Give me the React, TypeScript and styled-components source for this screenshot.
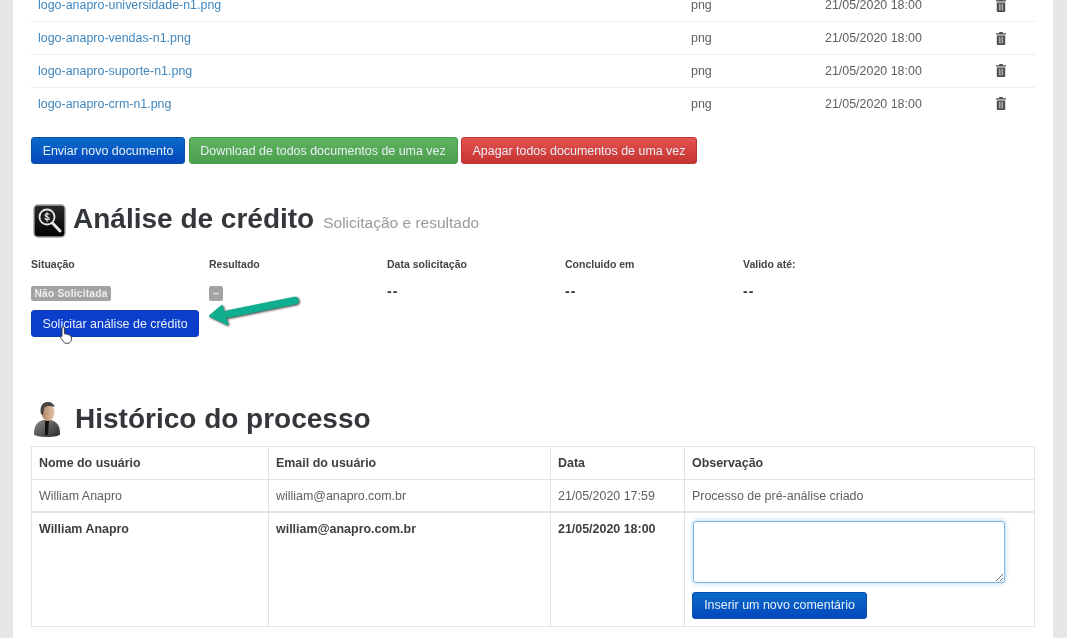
import React from "react";
import styled, { createGlobalStyle } from "styled-components";

const Global = createGlobalStyle`
  html, body { margin: 0; padding: 0; height: 100%; background: #e8e7e8; overflow: hidden; }
  body { font-family: "Liberation Sans", Arial, sans-serif; color: #555; }
`;

const Viewport = styled.div`
  width: 1067px;
  height: 638px;
  overflow: hidden;
  padding: 0 14px 0 13px;
  box-sizing: border-box;
  filter: blur(0.4px);
`;
const Panel = styled.main`
  display: flow-root;
  background: #fff;
  height: 100%;
  padding: 0 18px;
  box-sizing: border-box;
`;
const DocTable = styled.table`
  width: 1004px;
  margin-top: -11px;
  border-collapse: collapse;
  table-layout: fixed;
  font-size: 12.45px;
  td { height: 32.7px; padding: 0 7px; border-bottom: 1.5px solid #eeeeee; box-sizing: border-box; color: #5c6166; }
  tr:last-child td { border-bottom: none; }
`;
const FileLink = styled.a`
  color: #3f86bd;
  text-decoration: none;
`;
const Actions = styled.div`
  display: flex;
  gap: 3.5px;
  margin-top: 17.5px;
`;
const tones: Record<string, [string, string, string]> = {
  blue: ["#0a6cc9", "#0347bd", "#0a4fb0"],
  green: ["#60b460", "#4c9f4c", "#4a9a4a"],
  red: ["#e45350", "#c63432", "#bd3432"],
  solid: ["#0a3ecb", "#0a3ecb", "#0a3bb8"],
};
const Btn = styled.button<{ $tone: string; $w: number }>`
  width: ${(p) => p.$w}px;
  height: 27px;
  border-radius: 3px;
  border: 1px solid ${(p) => tones[p.$tone][2]};
  background: linear-gradient(${(p) => tones[p.$tone][0]}, ${(p) => tones[p.$tone][1]});
  color: #e8eef6;
  font: 12.45px "Liberation Sans", Arial, sans-serif;
  padding: 0;
  text-align: center;
  box-sizing: border-box;
  flex: none;
  display: block;
`;
const Heading = styled.div<{ $mt: number; $gap: number }>`
  display: flex;
  align-items: center;
  gap: ${(p) => p.$gap}px;
  margin-top: ${(p) => p.$mt}px;
  padding-left: 2px;
  height: 34px;
`;
const Title = styled.h2`
  margin: 0;
  font-size: 28px;
  font-weight: 700;
  color: #33363b;
  line-height: 34px;
  white-space: nowrap;
`;
const Sub = styled.small`
  font-size: 15.5px;
  font-weight: 400;
  color: #9a9a9a;
  margin-left: 9px;
`;
const InfoGrid = styled.div`
  display: grid;
  grid-template-columns: repeat(5, 178px);
  margin-top: 18px;
  font-size: 10.5px;
  font-weight: 700;
  color: #444;
`;
const InfoLabel = styled.div`
  height: 28px;
  line-height: 16px;
`;
const InfoValue = styled.div`
  height: 26px;
  padding-top: 2px;
  box-sizing: border-box;
`;
const DashValue = styled.div`
  height: 26px;
  font-size: 14px;
  font-weight: 700;
  letter-spacing: 1px;
  color: #333;
  line-height: 15px;
`;
const Badge = styled.span`
  display: block;
  width: fit-content;
  background: #a3a3a3;
  color: #eee;
  font-size: 10.2px;
  font-weight: 700;
  line-height: 15px;
  height: 15px;
  padding: 0 3.5px;
  border-radius: 2px;
  letter-spacing: 0.2px;
`;
const DashBadge = styled(Badge)`
  width: 14px;
  padding: 0;
  text-align: center;
  letter-spacing: 0;
`;
const RequestWrap = styled.div`
  position: relative;
  width: 168px;
`;
const Cursor = styled.svg`
  position: absolute;
  left: 28px;
  top: 16px;
`;
const Arrow = styled.svg`
  position: absolute;
  left: 177px;
  top: -19px;
  overflow: visible;
  filter: drop-shadow(1.5px 1.5px 1px rgba(0, 0, 0, 0.75));
`;
const HistTable = styled.table`
  width: 1004px;
  margin-top: 10px;
  border-collapse: collapse;
  table-layout: fixed;
  font-size: 12.45px;
  border: 1px solid #e6e6e6;
  th, td { border: 1px solid #e4e4e4; padding: 0 7px; text-align: left; vertical-align: middle; box-sizing: border-box; }
  th { height: 32.5px; color: #3b3e42; font-weight: 700; }
  tbody tr:first-child td { height: 33px; color: #5c6166; border-bottom: 2.5px solid #e4e4e4; }
`;
const EntryRow = styled.tr`
  td { height: 114px; vertical-align: top; padding-top: 9px; font-weight: 700; color: #3b3e42; line-height: 15px; }
`;
const EntryCell = styled.td`
  && { padding: 7.5px 0 0 7px; }
`;
const Note = styled.textarea`
  display: block;
  width: 312px;
  height: 62px;
  box-sizing: border-box;
  border: 1px solid #7fb8e2;
  border-radius: 3px;
  box-shadow: 0 0 5px rgba(102, 175, 233, 0.6);
  margin: 0 0 9px 1px;
  outline: none;
`;

const Trash = () => (
  <svg width="10" height="13" viewBox="0 0 10 13" style={{ display: "block", marginLeft: 1 }} fill="#4a4a4a">
    <path d="M3.500 0h3l.5 1.200h3V2.600H0V1.200h3z" />
    <path d="M.8 3.400h8.400V12a1 1 0 0 1-1 1H1.800a1 1 0 0 1-1-1zM2.900 4.800v6.800h.6V4.800zm1.800 0v6.800h.6V4.800zm1.800 0v6.800h.6V4.800z" fillRule="evenodd" />
  </svg>
);

const CreditIcon = () => (
  <svg width="33" height="34" viewBox="0 0 33 34" style={{ flex: "none", marginRight: 1 }}>
    <defs>
      <linearGradient id="cg" x1="0" y1="0" x2="0" y2="1">
        <stop offset="0" stopColor="#2b2b2b" />
        <stop offset="1" stopColor="#000" />
      </linearGradient>
    </defs>
    <rect x="1" y="1" width="31" height="32" rx="4" fill="url(#cg)" stroke="#a0a0a0" strokeWidth="1.4" />
    <circle cx="14" cy="13" r="7.500" fill="#1c1c1c" stroke="#e6e6e6" strokeWidth="1.800" />
    <path d="M19.500 19l7.500 8" stroke="#e6e6e6" strokeWidth="3" strokeLinecap="round" />
    <path d="M16.300 10.600c-.6-1.200-4.300-1.400-4.300.6 0 2 4.300 1.100 4.300 3.200 0 2-3.900 1.800-4.500-.4M14 8.300v9.400" fill="none" stroke="#eee" strokeWidth="1.100" />
  </svg>
);

const PersonIcon = () => (
  <svg width="28" height="36" viewBox="0 0 28 36" style={{ flex: "none" }}>
    <defs>
      <linearGradient id="pb" x1="0" y1="0" x2="1" y2="1">
        <stop offset="0" stopColor="#8a8a8a" />
        <stop offset="1" stopColor="#2a2a2a" />
      </linearGradient>
      <linearGradient id="pf" x1="0" y1="0" x2="1" y2="0">
        <stop offset="0" stopColor="#a98366" />
        <stop offset="1" stopColor="#e8c4a4" />
      </linearGradient>
    </defs>
    <path d="M1 33c0-9 3-12 9-14h8c6 2 9 5 9 14 0 2-6 3-13 3S1 35 1 33z" fill="url(#pb)" />
    <path d="M12 20h4l-1 14h-3z" fill="#111" />
    <ellipse cx="15" cy="11.500" rx="6.500" ry="8.500" fill="url(#pf)" />
    <path d="M8 13C6.500 6 9 1 14.500 1c4 0 6.500 2 7 5-3-1.500-7-1.500-9.500 0-1.500 1-1 5-2 8z" fill="#444" />
  </svg>
);

const docs = ["universidade", "vendas", "suporte", "crm"];

export default function App() {
  return (
    <Viewport>
      <Global />
      <Panel>
        <DocTable>
          <colgroup>
            <col style={{ width: 653 }} />
            <col style={{ width: 134 }} />
            <col style={{ width: 170 }} />
            <col />
          </colgroup>
          <tbody>
            {docs.map((d) => (
              <tr key={d}>
                <td><FileLink href="#">logo-anapro-{d}-n1.png</FileLink></td>
                <td>png</td>
                <td>21/05/2020 18:00</td>
                <td><Trash /></td>
              </tr>
            ))}
          </tbody>
        </DocTable>
        <Actions>
          <Btn $tone="blue" $w={154}>Enviar novo documento</Btn>
          <Btn $tone="green" $w={269}>Download de todos documentos de uma vez</Btn>
          <Btn $tone="red" $w={236}>Apagar todos documentos de uma vez</Btn>
        </Actions>
        <Heading $mt={40} $gap={6}>
          <CreditIcon />
          <Title>Análise de crédito<Sub>Solicitação e resultado</Sub></Title>
        </Heading>
        <InfoGrid>
          <InfoLabel>Situação</InfoLabel>
          <InfoLabel>Resultado</InfoLabel>
          <InfoLabel>Data solicitação</InfoLabel>
          <InfoLabel>Concluido em</InfoLabel>
          <InfoLabel>Valido até:</InfoLabel>
          <InfoValue><Badge>Não Solicitada</Badge></InfoValue>
          <InfoValue><DashBadge>–</DashBadge></InfoValue>
          <DashValue>--</DashValue>
          <DashValue>--</DashValue>
          <DashValue>--</DashValue>
        </InfoGrid>
        <RequestWrap>
          <Btn $tone="solid" $w={168}>Solicitar análise de crédito</Btn>
          <Arrow width="96" height="44" viewBox="0 0 96 44">
            <path d="M87 9.500L20 23" stroke="#0fae8e" strokeWidth="7.500" strokeLinecap="round" />
            <path d="M1 25L14 14l6 20z" fill="#0fae8e" stroke="#0fae8e" strokeWidth="1" strokeLinejoin="round" />
          </Arrow>
          <Cursor width="14" height="18" viewBox="0 0 14 18">
            <path d="M3 2a1.200 1.200 0 0 1 2.400 0v6l1-.3c.8 0 1 .5 1.200.7.8-.4 1.500 0 1.700.5.800-.3 1.700 0 1.800.8.600 0 1.300.4 1.300 1.300v2c0 2-1 3.500-2.500 4.200H6c-1-.7-2.500-3-4.500-5.700-.6-1 .6-1.900 1.500-1z" fill="#fff" stroke="#333" strokeWidth=".9" />
          </Cursor>
        </RequestWrap>
        <Heading $mt={65} $gap={14}>
          <PersonIcon />
          <Title>Histórico do processo</Title>
        </Heading>
        <HistTable>
          <colgroup>
            <col style={{ width: 237 }} />
            <col style={{ width: 282 }} />
            <col style={{ width: 134 }} />
            <col />
          </colgroup>
          <thead>
            <tr>
              <th>Nome do usuário</th>
              <th>Email do usuário</th>
              <th>Data</th>
              <th>Observação</th>
            </tr>
          </thead>
          <tbody>
            <tr>
              <td>William Anapro</td>
              <td>william@anapro.com.br</td>
              <td>21/05/2020 17:59</td>
              <td>Processo de pré-análise criado</td>
            </tr>
            <EntryRow>
              <td>William Anapro</td>
              <td>william@anapro.com.br</td>
              <td>21/05/2020 18:00</td>
              <EntryCell>
                <Note />
                <Btn $tone="blue" $w={175}>Inserir um novo comentário</Btn>
              </EntryCell>
            </EntryRow>
          </tbody>
        </HistTable>
      </Panel>
    </Viewport>
  );
}
